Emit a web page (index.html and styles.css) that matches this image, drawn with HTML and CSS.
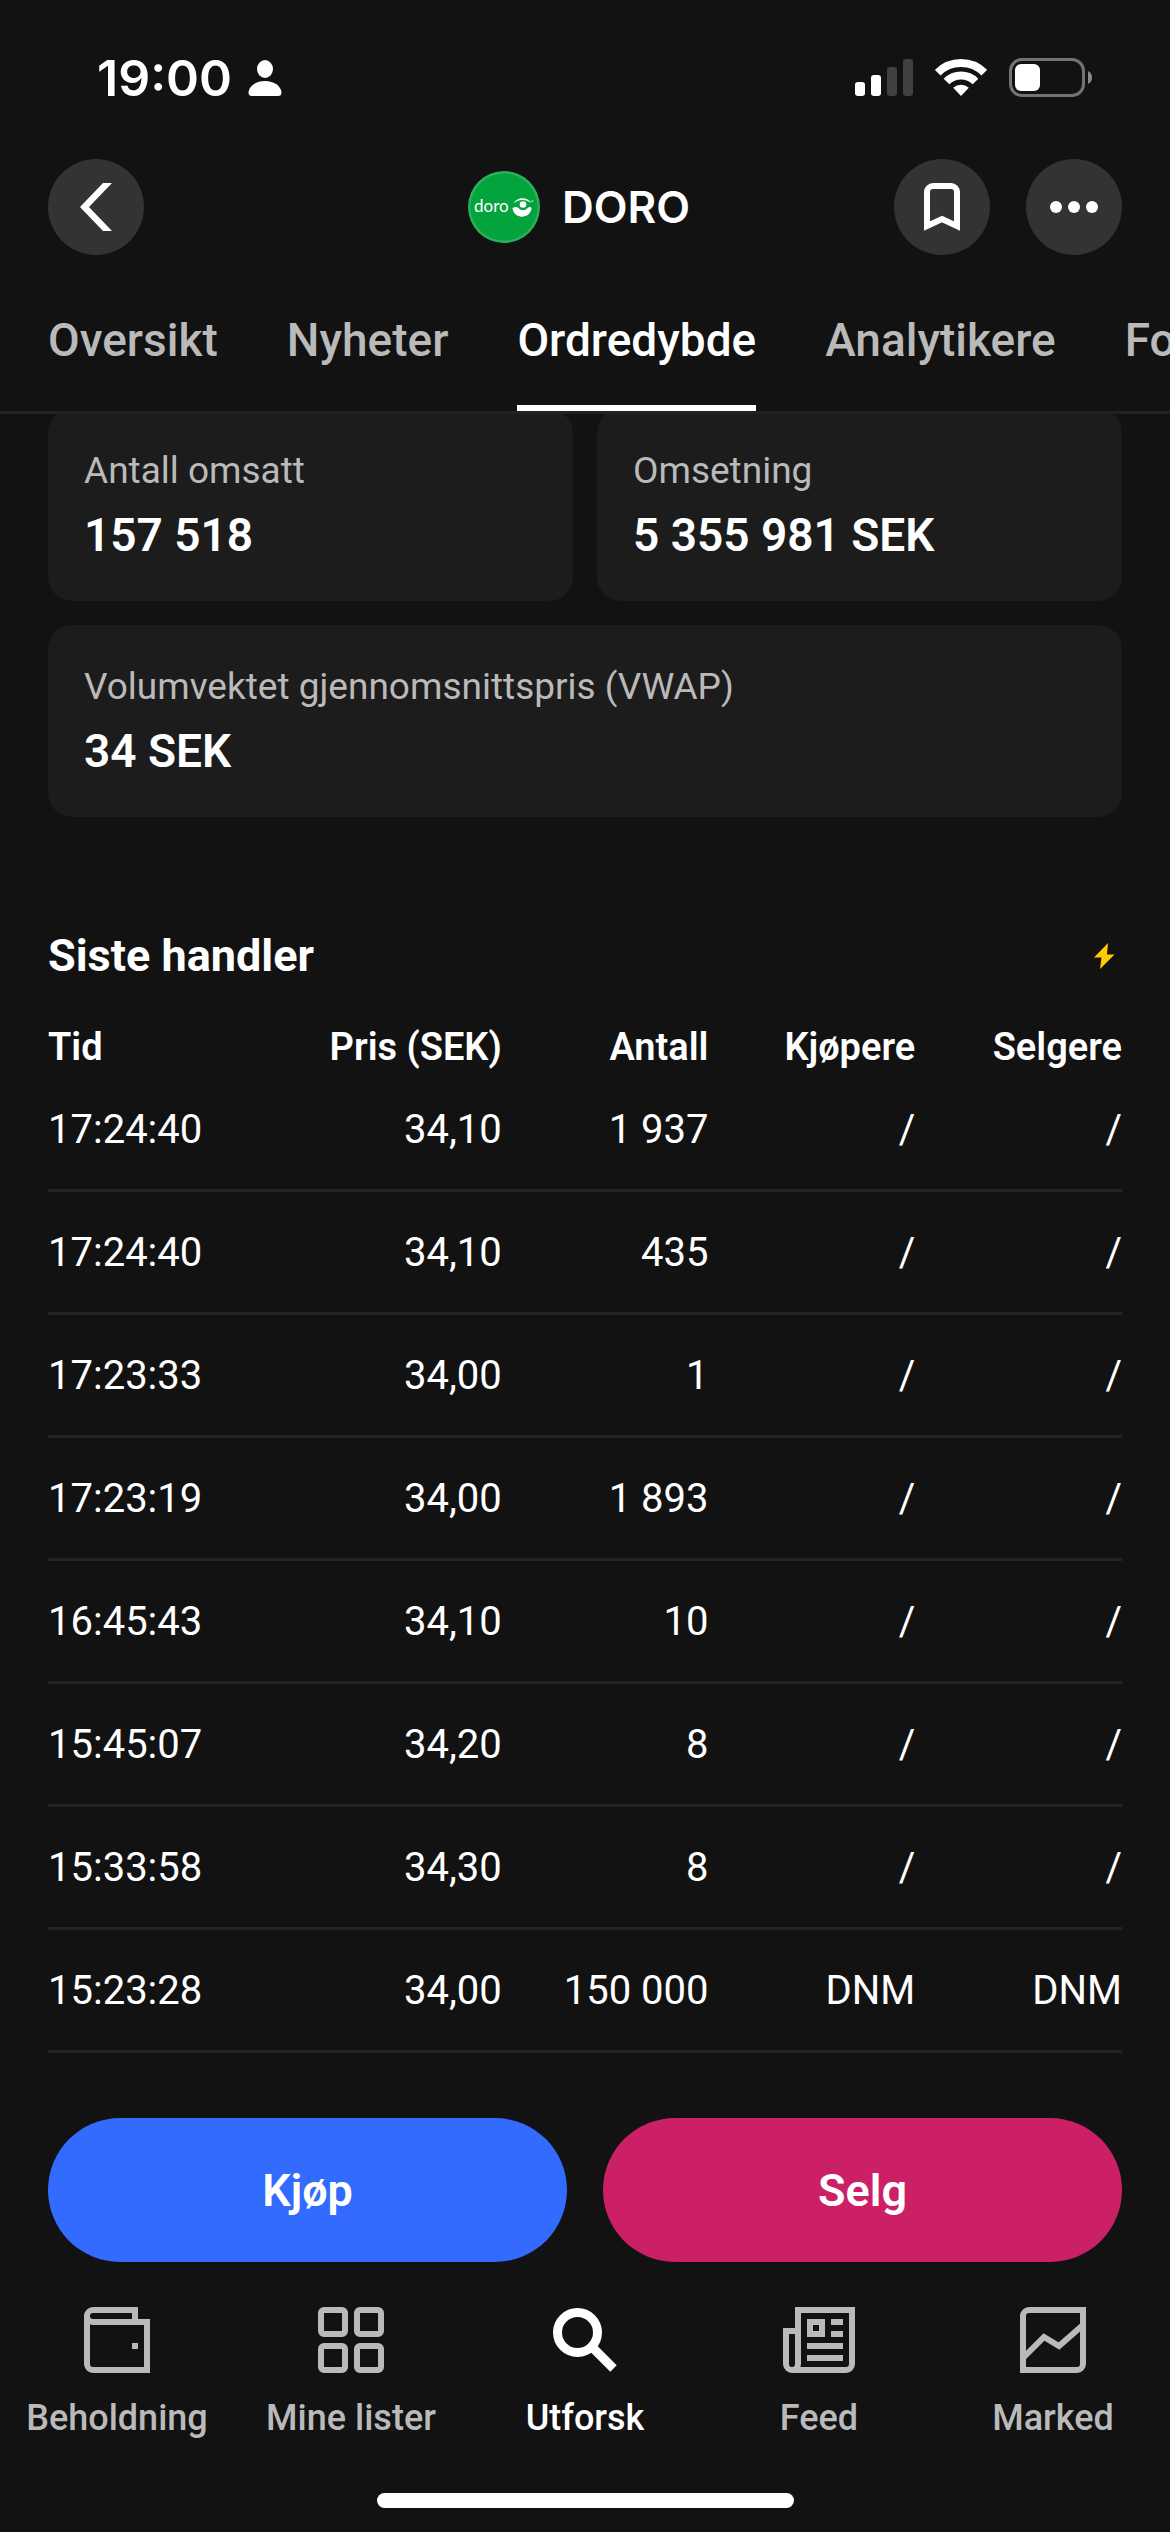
FILE: index.html
```html
<!DOCTYPE html>
<html lang="nb">

<head>
    <meta charset="UTF-8">
    <meta name="viewport" content="width=device-width, initial-scale=1.0">
    <title>DORO - Ordredybde</title>
    <link rel="stylesheet" href="styles.css">
</head>

<body>
    <div class="status">
        <div class="status-left">
            <span class="clock">19:00</span>
            <svg width="34" height="38" viewBox="0 0 34 38" fill="#fff">
                <ellipse cx="17" cy="10" rx="8" ry="9" />
                <path d="M4 37q-3.500 0-3.500-3.500C1 27 8 22 17 22s16 5 16.500 11.500q0 3.500-3.500 3.500z" />
            </svg>
        </div>
        <div class="status-right">
            <svg width="58" height="40" viewBox="0 0 58 40">
                <rect x="0" y="24" width="10" height="14" rx="3" fill="#fff" />
                <rect x="16" y="17" width="10" height="21" rx="3" fill="#fff" />
                <rect x="32" y="9" width="10" height="29" rx="3" fill="#414141" />
                <rect x="48" y="1" width="10" height="37" rx="3" fill="#414141" />
            </svg>
            <svg width="52" height="40" viewBox="0 0 52 40">
                <path d="M2.700 14.700a33 33 0 0 1 46.600 0M11.500 23.500a20.500 20.500 0 0 1 29 0" fill="none" stroke="#fff" stroke-width="8" />
                <path d="M26 38l-7.800-8.200a11.500 11.500 0 0 1 15.600 0z" fill="#fff" />
            </svg>
            <svg width="83" height="40" viewBox="0 0 83 40">
                <rect x="1.500" y="1.500" width="73" height="36" rx="11.500" fill="none" stroke="#737373" stroke-width="3" />
                <rect x="6" y="6" width="25" height="27" rx="6" fill="#fff" />
                <path d="M79 13q4 2 4 6.500t-4 6.500z" fill="#8a8a8a" />
            </svg>
        </div>
    </div>

    <header class="header">
        <div>
            <button class="round" aria-label="Tilbake">
                <svg width="48" height="48" viewBox="0 0 48 48" fill="#fff">
                    <path d="M31 0h9L17 24l23 24h-9L8 24z" />
                </svg>
            </button>
        </div>
        <div class="stock">
            <svg width="72" height="72" viewBox="0 0 72 72">
                <circle cx="36" cy="36" r="36" fill="#2bb05a" />
                <circle cx="36" cy="36" r="33.500" fill="#03a33d" />
                <text class="logo-text" x="6" y="41">doro</text>
                <path d="M45.500 32c4-6.500 14-6.500 18 0-3-1.500-5-3-9-3s-6 1.500-9 3z" fill="#fff" />
                <path d="M44.500 37c3-1.500 5-1 6.500.500 2 2 6 2 8 0 1.500-1.500 3-2 4.500-.500-1 11.500-18 11.500-19 0z" fill="#fff" />
                <circle cx="55" cy="33.500" r="3.300" fill="#fff" />
                <circle cx="64.300" cy="30" r=".8" fill="#fff" />
            </svg>
            <h1>DORO</h1>
        </div>
        <div class="actions">
            <button class="round" aria-label="Lagre">
                <svg width="48" height="48" viewBox="0 0 48 48" fill="none" stroke="#fff" stroke-width="6">
                    <path d="M9 43V9a6 6 0 0 1 6-6h18a6 6 0 0 1 6 6v34L24 36z" />
                </svg>
            </button>
            <button class="round" aria-label="Mer">
                <svg width="48" height="48" viewBox="0 0 48 48" fill="#fff">
                    <circle cx="6" cy="24" r="6" />
                    <circle cx="24" cy="24" r="6" />
                    <circle cx="42" cy="24" r="6" />
                </svg>
            </button>
        </div>
    </header>

    <nav class="tabs">
        <a href="#">Oversikt</a>
        <a href="#">Nyheter</a>
        <a href="#" class="active">Ordredybde</a>
        <a href="#">Analytikere</a>
        <a href="#">Forum</a>
    </nav>

    <main>
        <div class="cards">
            <div class="card">
                <p class="card-label">Antall omsatt</p>
                <p class="card-value">157 518</p>
            </div>
            <div class="card">
                <p class="card-label">Omsetning</p>
                <p class="card-value">5 355 981 SEK</p>
            </div>
            <div class="card wide">
                <p class="card-label">Volumvektet gjennomsnittspris (VWAP)</p>
                <p class="card-value">34 SEK</p>
            </div>
        </div>

        <div class="section-title">
            <h2>Siste handler</h2>
            <svg width="36" height="36" viewBox="0 0 36 36">
                <path d="M22 5L8 19.500h7.500L14 31l14.500-14.500H21z" fill="#ffcb05" />
            </svg>
        </div>

        <table class="trades">
            <thead>
                <tr>
                    <th class="time">Tid</th>
                    <th>Pris (SEK)</th>
                    <th>Antall</th>
                    <th>Kjøpere</th>
                    <th>Selgere</th>
                </tr>
            </thead>
            <tbody>
                <tr><td>17:24:40</td><td>34,10</td><td>1 937</td><td>/</td><td>/</td></tr>
                <tr><td>17:24:40</td><td>34,10</td><td>435</td><td>/</td><td>/</td></tr>
                <tr><td>17:23:33</td><td>34,00</td><td>1</td><td>/</td><td>/</td></tr>
                <tr><td>17:23:19</td><td>34,00</td><td>1 893</td><td>/</td><td>/</td></tr>
                <tr><td>16:45:43</td><td>34,10</td><td>10</td><td>/</td><td>/</td></tr>
                <tr><td>15:45:07</td><td>34,20</td><td>8</td><td>/</td><td>/</td></tr>
                <tr><td>15:33:58</td><td>34,30</td><td>8</td><td>/</td><td>/</td></tr>
                <tr><td>15:23:28</td><td>34,00</td><td>150 000</td><td>DNM</td><td>DNM</td></tr>
            </tbody>
        </table>
    </main>

    <footer>
        <div class="trade-buttons">
            <button class="buy">Kjøp</button>
            <button class="sell">Selg</button>
        </div>
        <nav class="menu">
            <a href="#">
                <svg width="72" height="72" viewBox="0 0 72 72">
                    <path d="M54 18V6H12a6 6 0 0 0 0 12M6 12v48a6 6 0 0 0 6 6h54V18H12" />
                    <rect class="fill" x="51" y="39" width="6" height="6" />
                </svg>
                Beholdning
            </a>
            <a href="#">
                <svg width="72" height="72" viewBox="0 0 72 72">
                    <rect x="6" y="6" width="24" height="24" rx="3" />
                    <rect x="42" y="6" width="24" height="24" rx="3" />
                    <rect x="6" y="42" width="24" height="24" rx="3" />
                    <rect x="42" y="42" width="24" height="24" rx="3" />
                </svg>
                Mine lister
            </a>
            <a href="#" class="active">
                <svg width="72" height="72" viewBox="0 0 72 72">
                    <circle cx="28.500" cy="28.500" r="20" />
                    <path d="M42 42l22.500 22.500" />
                </svg>
                Utforsk
            </a>
            <a href="#">
                <svg width="72" height="72" viewBox="0 0 72 72">
                    <path d="M15 60V6h54v54a6 6 0 0 1-6 6H9a6 6 0 0 1-6-6V27h12M15 60a6 6 0 0 1-6 6" />
                    <rect x="27" y="18" width="12" height="12" />
                    <path d="M48 18h12M48 30h12M24 42h36M24 54h36" />
                </svg>
                Feed
            </a>
            <a href="#">
                <svg width="72" height="72" viewBox="0 0 72 72">
                    <path d="M6 66V12a6 6 0 0 1 6-6h54v54a6 6 0 0 1-6 6z" />
                    <path d="M6 54l21-21 15 9 24-21" />
                </svg>
                Marked
            </a>
        </nav>
        <div class="home-bar"></div>
    </footer>
</body>

</html>
```

FILE: styles.css
```css
* {
    box-sizing: border-box;
}

body {
    margin: 0;
    min-height: 100vh;
    display: flex;
    flex-direction: column;
    overflow-x: hidden;
    background-color: #121212;
    color: #fff;
    font-family: Roboto, sans-serif;
    font-size: 40px;
    line-height: 48px;
}

h1,
h2,
p {
    margin: 0;
}

h1 {
    font-family: Inter, sans-serif;
    font-size: 44px;
    font-weight: 600;
    line-height: 60px;
}

h2 {
    font-size: 45px;
    line-height: 60px;
}

a {
    color: #bababa;
    text-decoration: none;
}

button {
    padding: 0;
    border: none;
    color: #fff;
    font-family: inherit;
    cursor: pointer;
}

svg {
    display: block;
}

/* status bar */
.status {
    display: flex;
    justify-content: space-between;
    align-items: center;
    padding: 48px 78px 0 97px;
}

.status-left {
    display: flex;
    align-items: center;
    gap: 16px;
}

.status-right {
    display: flex;
    align-items: center;
    gap: 22px;
}

.clock {
    font-family: Inter, sans-serif;
    font-size: 50px;
    font-weight: 600;
    line-height: 60px;
}

/* header */
.header {
    display: grid;
    grid-template-columns: 1fr auto 1fr;
    align-items: center;
    padding: 51px 48px 0;
}

.round {
    display: flex;
    align-items: center;
    justify-content: center;
    width: 96px;
    height: 96px;
    border-radius: 50%;
    background-color: #333;
}

.stock {
    display: flex;
    align-items: center;
    gap: 22px;
    padding-right: 12px;
}

.logo-text {
    fill: #fff;
    font-family: Lato, sans-serif;
    font-size: 17px;
}

.actions {
    display: flex;
    justify-content: flex-end;
    gap: 36px;
}

/* tabs */
.tabs {
    position: relative;
    z-index: 1;
    display: flex;
    gap: 69px;
    padding: 0 48px;
    overflow: hidden;
    border-bottom: 3px solid #222;
    background-color: #121212;
    font-size: 46px;
    font-weight: 500;
    line-height: 60px;
}

.tabs a {
    padding: 55px 0 35px;
    border-bottom: 6px solid transparent;
}

.tabs .active {
    color: #fff;
    border-color: #fff;
}

/* content, scrolled a little under the tabs */
main {
    flex: 1;
    margin-top: -5px;
    padding: 0 48px 60px;
}

.cards {
    display: grid;
    grid-template-columns: 1fr 1fr;
    gap: 24px;
}

.card {
    padding: 38px 36px 36px;
    border-radius: 24px;
    background-color: #1c1c1c;
}

.wide {
    grid-column: span 2;
}

.card-label {
    color: #bababa;
    font-size: 37px;
}

.card-value {
    margin-top: 10px;
    font-size: 46px;
    font-weight: 600;
    line-height: 60px;
}

.section-title {
    display: flex;
    justify-content: space-between;
    align-items: center;
    margin: 109px 0 39px;
}

.trades {
    width: 100%;
    table-layout: fixed;
    border-collapse: separate;
    border-spacing: 0;
}

.trades th,
.trades td {
    padding: 0;
    text-align: right;
    white-space: nowrap;
}

.trades th {
    width: 19.25%;
    font-size: 38px;
    font-weight: 600;
    line-height: 44px;
}

.trades th.time {
    width: 23%;
}

.trades th:first-child,
.trades td:first-child {
    text-align: left;
}

.trades td {
    padding: 37px 0 35px;
    border-bottom: 3px solid #242424;
}

/* bottom bar */
footer {
    position: sticky;
    bottom: 0;
    background-color: #121212;
}

.trade-buttons {
    display: grid;
    grid-template-columns: 1fr 1fr;
    gap: 36px;
    padding: 0 48px;
}

.trade-buttons button {
    height: 144px;
    border-radius: 72px;
    font-size: 45px;
    font-weight: 600;
}

.buy {
    background-color: #336bff;
}

.sell {
    background-color: #cc2066;
}

.menu {
    display: grid;
    grid-template-columns: repeat(5, 1fr);
    padding-top: 42px;
    font-size: 36px;
    font-weight: 500;
}

.menu a {
    display: flex;
    flex-direction: column;
    align-items: center;
    gap: 18px;
}

.menu .active {
    color: #fff;
}

.menu svg {
    fill: none;
    stroke: currentColor;
    stroke-width: 6px;
}

.menu .fill {
    fill: currentColor;
    stroke: none;
}

.menu .active svg {
    stroke-width: 9px;
}

.home-bar {
    width: 36%;
    max-width: 417px;
    height: 15px;
    margin: 51px auto 24px;
    border-radius: 8px;
    background-color: #fff;
}
```
